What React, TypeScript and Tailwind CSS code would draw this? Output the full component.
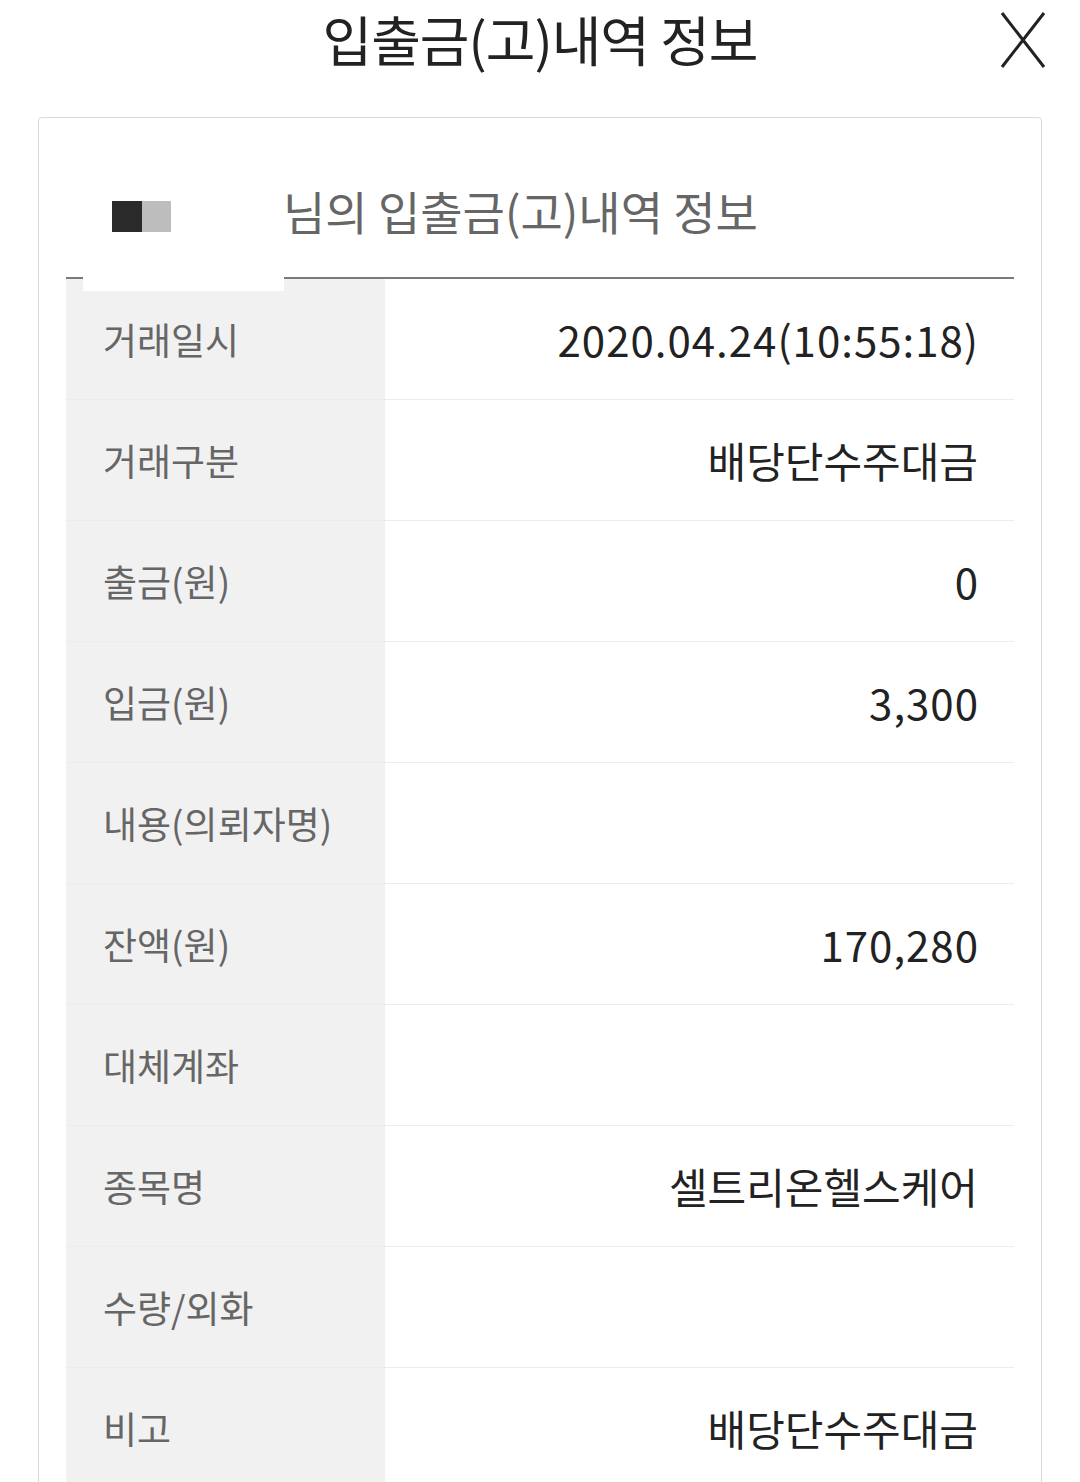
import React from 'react';

const rows: { label: string; value: string; num?: boolean }[] = [
  { label: '거래일시', value: '2020.04.24(10:55:18)', num: true },
  { label: '거래구분', value: '배당단수주대금' },
  { label: '출금(원)', value: '0', num: true },
  { label: '입금(원)', value: '3,300', num: true },
  { label: '내용(의뢰자명)', value: '' },
  { label: '잔액(원)', value: '170,280', num: true },
  { label: '대체계좌', value: '' },
  { label: '종목명', value: '셀트리온헬스케어' },
  { label: '수량/외화', value: '' },
  { label: '비고', value: '배당단수주대금' },
];

export default function App() {
  return (
    <div
      className="w-[1080px] h-[1482px] overflow-hidden bg-white"
      style={{ fontFamily: '"Noto Sans CJK KR", "Noto Sans", sans-serif' }}
    >
      {/* 상단 헤더 */}
      <div className="relative h-[78px] flex items-center justify-center">
        <h1 className="text-[54px] leading-none text-[#222] tracking-[-1px]">입출금(고)내역 정보</h1>
        <button className="absolute right-[34px] top-[12px] w-[46px] h-[56px]">
          <svg width="46" height="56" viewBox="0 0 46 56" fill="none">
            <path d="M2 1 L44 55 M44 1 L2 55" stroke="#222" strokeWidth="3" />
          </svg>
        </button>
      </div>

      {/* 카드 */}
      <div className="relative mt-[39px] ml-[38px] w-[1004px] border border-[#d9d9d9] rounded-[4px] px-[27px]">
        <div className="h-[161px] border-b-2 border-[#7a7a7a] flex items-center pl-[217px] pt-[24px]">
          <span className="text-[46px] leading-none text-[#666]">님의 입출금(고)내역 정보</span>
        </div>

        <div className="flex flex-col">
          {rows.map((row, i) => (
            <div key={i} className="flex h-[121px] border-b border-[#ececec]">
              <div className="w-[319px] bg-[#f1f1f1] flex items-center pl-[37px]">
                <span className="text-[37px] leading-none text-[#666]">{row.label}</span>
              </div>
              <div className="flex-1 flex items-center justify-end pr-[36px]">
                <span
                  className={
                    row.num
                      ? 'text-[42px] leading-none text-[#222] tracking-[1px] -mr-[1px]'
                      : 'text-[42px] leading-none text-[#222]'
                  }
                >
                  {row.value}
                </span>
              </div>
            </div>
          ))}
        </div>

        {/* 이름 가림 */}
        <div className="absolute left-[44px] top-0 w-[201px] h-[173px] bg-white">
          <div className="absolute left-[29px] top-[83px] flex">
            <div className="w-[30px] h-[31px] bg-[#2a2a2a]" />
            <div className="w-[29px] h-[31px] bg-[#bdbdbd]" />
          </div>
        </div>
      </div>
    </div>
  );
}
